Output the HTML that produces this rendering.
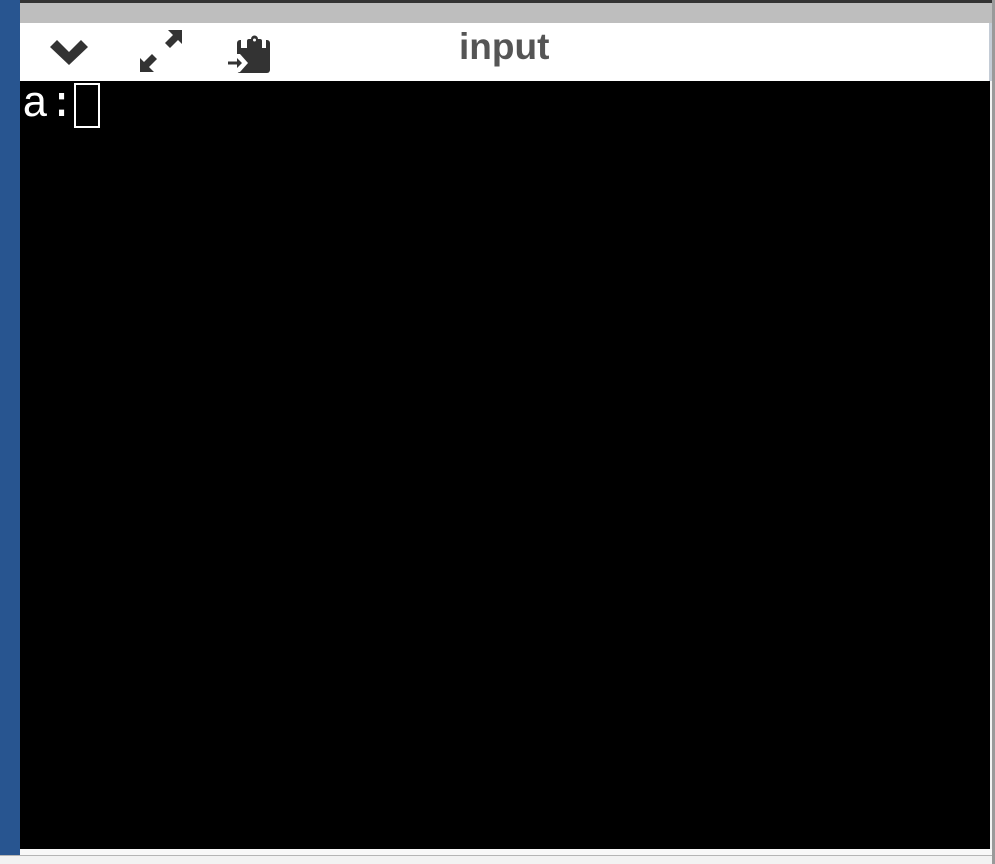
<!DOCTYPE html>
<html><head><style>
html,body{margin:0;padding:0;width:995px;height:864px;overflow:hidden;background:#f2f2f2;position:relative;font-family:"Liberation Sans",sans-serif}
div{position:absolute}
</style></head><body>
<div style="left:0;top:0;width:20px;height:855px;background:#285590"></div>
<div style="left:20px;top:0;width:975px;height:3px;background:#333"></div>
<div style="left:20px;top:3px;width:972px;height:20px;background:#bebebe"></div>
<div style="left:992px;top:0;width:3px;height:864px;background:#9a9a9a"></div>
<div style="left:20px;top:23px;width:969px;height:58px;background:#fff"></div>
<div style="left:989px;top:23px;width:3px;height:58px;background:#c4ccd6"></div>
<div style="left:20px;top:81px;width:970px;height:768px;background:#000"></div>
<div style="left:20px;top:849px;width:972px;height:6px;background:#f8f8f8"></div>
<div style="left:0;top:855px;width:992px;height:1px;background:#b5b5b5"></div>
<svg style="position:absolute;left:50px;top:40px" width="38" height="26" viewBox="0 0 38 26"><path d="M0 7 L7 0 L19 12 L31 0 L38 7 L19 25 Z" fill="#333"/></svg>
<svg style="position:absolute;left:138px;top:29px" width="46" height="44" viewBox="0 0 46 44"><path d="M44 1 L30 1 L35 6 L27 14 L32 19 L40 11 L44 15 Z" fill="#333"/><path d="M2 43 L16 43 L11 38 L19 30 L14 25 L6 33 L2 29 Z" fill="#333"/></svg>
<svg style="position:absolute;left:225px;top:30px" width="50" height="50" viewBox="0 0 50 50">
<rect x="12" y="10" width="33" height="33" rx="3" fill="#333"/>
<rect x="16" y="9" width="25" height="9" fill="#fff"/>
<path d="M22 18 V11 A2 2 0 0 1 24 9 H26 A3.5 3.5 0 0 1 33 9 H35 A2 2 0 0 1 37 11 V18 Z" fill="#333"/>
<circle cx="29.5" cy="10" r="1.5" fill="#fff"/>
<path d="M12 24 L15 24 L23 33 L15 42 L12 42 Z" fill="#fff"/>
<path d="M3 31.5 H12 V28 L17 33 L12 38 V34.5 H3 Z" fill="#333"/>
</svg>
<div style="left:459px;top:24px;font-weight:bold;font-size:37px;color:#555;line-height:46px">input</div>
<div style="left:22px;top:83px;font-family:'Liberation Mono',monospace;font-size:44px;color:#fff;line-height:45px">a:</div>
<div style="left:74px;top:83px;width:22px;height:41px;border:2px solid #fff"></div>
</body></html>
